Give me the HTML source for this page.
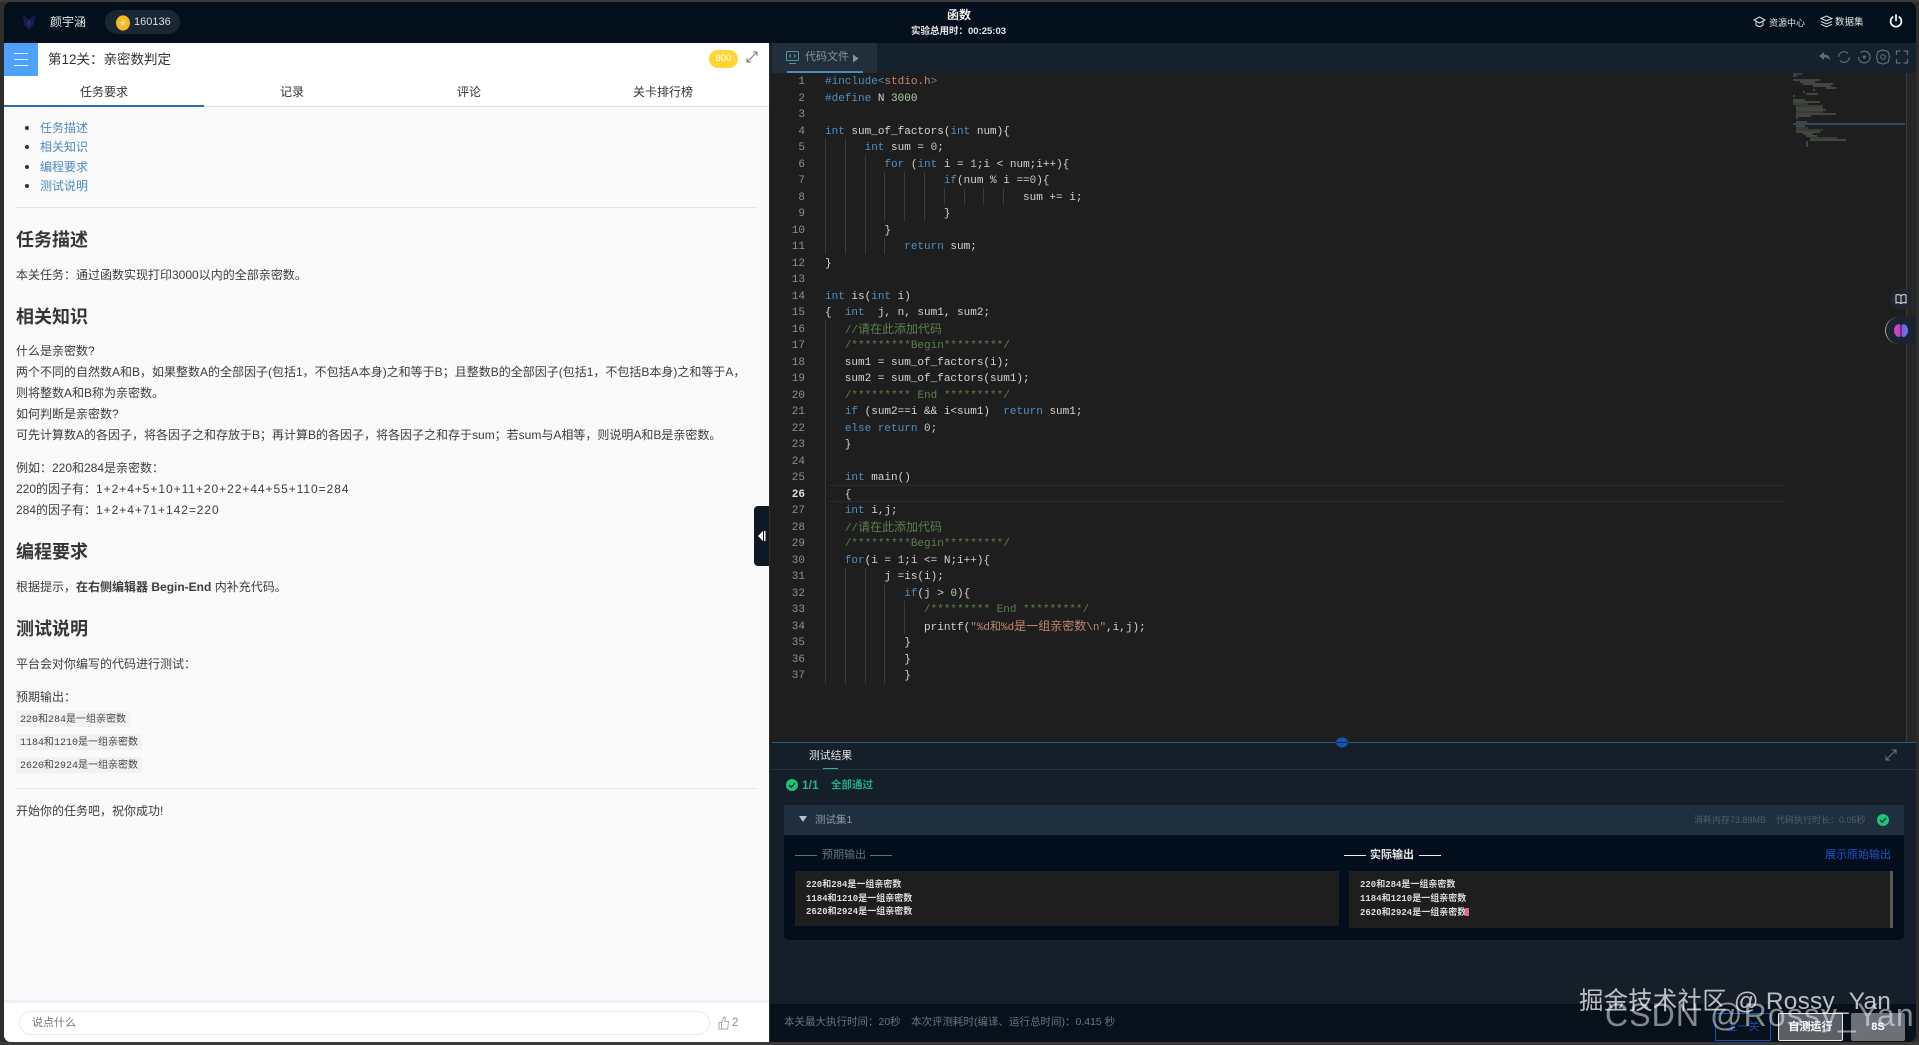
<!DOCTYPE html>
<html lang="zh"><head><meta charset="utf-8"><title>函数</title>
<style>
*{box-sizing:border-box}
html,body{margin:0;padding:0;width:1919px;height:1045px;overflow:hidden;background:#2e2d2d;font-family:"Liberation Sans","Noto Sans CJK SC",sans-serif}
.a{position:absolute}
.t{position:absolute;white-space:nowrap;line-height:20px;height:20px}
.h2{font-size:18px;font-weight:700;color:#363636;left:16px}
.p{font-size:12px;color:#3c3c3c;left:16px}
.link{font-size:12px;color:#4f8ac2;left:40px}
.dot{position:absolute;left:25px;width:4px;height:4px;border-radius:50%;background:#333}
.chip{position:absolute;left:16px;height:16px;background:#f2f2f2;font:10px/19px "Liberation Mono","Noto Sans CJK SC",monospace;color:#444;padding:0 4px;white-space:nowrap}
.tab{position:absolute;top:82px;font-size:12px;line-height:20px;color:#333;transform:translateX(-50%);white-space:nowrap}
#code,#nums{position:absolute;top:74px;font:11px "Liberation Mono","Noto Sans CJK SC",monospace;color:#d4d4d4}
#code{left:825px}
#nums{left:780px;width:25px;text-align:right;color:#8a8f92}
.l{height:16.5px;line-height:16.5px;white-space:pre}
.k{color:#4f8fc4}.c{color:#5c7f4c}.n{color:#b5cea8}.s{color:#c08670}.z{font-size:12px}
.o{position:absolute;font:bold 9px/13.5px "Liberation Mono","Noto Sans CJK SC",monospace;color:#dcdcdc;white-space:pre}
.sp{letter-spacing:.95px}
</style></head><body>

<div class="a" style="left:0;top:0;width:1919px;height:2px;background:#3b3a3a"></div>
<div class="a" style="left:0;top:1042px;width:1919px;height:3px;background:#3b3a3a"></div>

<!-- top bar -->
<div class="a" style="left:4px;top:2px;width:1912px;height:41px;background:#03101b;border-radius:7px 7px 0 0"></div>
<svg class="a" style="left:20px;top:12px" width="18" height="20" viewBox="0 0 18 20"><path d="M3 3l3 2 3 3 3-3 3-2-1 9-5 6-5-6z" fill="#14204f"/><path d="M9 7l1.500 4L9 15l-1.500-4z" fill="#46245c"/></svg>
<div class="t" style="left:50px;top:12px;font-size:12px;color:#e8e8e8">颜宇涵</div>
<div class="a" style="left:105px;top:10px;width:75px;height:24px;border-radius:12px;background:#1a2733"></div>
<svg class="a" style="left:115px;top:15px" width="16" height="16" viewBox="0 0 16 16"><ellipse cx="8" cy="8" rx="7" ry="7.6" fill="#f5b921"/><path d="M8 4.500l1 2.400 2.300.2-1.800 1.500.6 2.400L8 9.800 5.900 11l.6-2.400-1.800-1.500 2.300-.2z" fill="#fde68a"/></svg>
<div class="t" style="left:134px;top:12px;font-size:11px;color:#d8dde0">160136</div>

<div class="t" style="left:947px;top:5px;font-size:12px;font-weight:700;color:#eee">函数</div>
<div class="t" style="left:911px;top:22px;font-size:9.500px;font-weight:700;color:#e8e8e8">实验总用时&#65306;00:25:03</div>

<svg class="a" style="left:1753px;top:16px" width="13" height="12" viewBox="0 0 13 12" fill="none" stroke="#e0e0e0"><path d="M1 4l5.500-3L12 4 6.500 7z"/><path d="M3 5.500V9c2 2 5 2 7 0V5.500"/></svg>
<div class="t" style="left:1769px;top:13px;font-size:9px;color:#e4e4e4">资源中心</div>
<svg class="a" style="left:1820px;top:15px" width="13" height="13" viewBox="0 0 13 13" fill="none" stroke="#e0e0e0"><path d="M1 3.500L6.500 1 12 3.500 6.500 6z"/><path d="M1 6.500L6.500 9 12 6.500M1 9.300l5.500 2.500L12 9.300"/></svg>
<div class="t" style="left:1835px;top:13px;font-size:9.500px;color:#e4e4e4">数据集</div>
<svg class="a" style="left:1889px;top:14px" width="14" height="14" viewBox="0 0 14 14" fill="none" stroke="#fff" stroke-width="1.700" stroke-linecap="round"><path d="M7 1v5.500"/><path d="M3.800 3a5.400 5.400 0 1 0 6.400 0"/></svg>

<!-- left panel -->
<div class="a" style="left:4px;top:43px;width:765px;height:999px;background:#fafafa;border-radius:0 0 0 7px"></div>
<div class="a" style="left:4px;top:43px;width:765px;height:33px;background:#fff"></div>
<div class="a" style="left:4px;top:43px;width:34px;height:33px;background:#4da3fb"></div>
<div class="a" style="left:14px;top:53px;width:14px;height:1px;background:#e8f3ff"></div>
<div class="a" style="left:14px;top:59px;width:14px;height:1px;background:#e8f3ff"></div>
<div class="a" style="left:14px;top:65px;width:14px;height:1px;background:#e8f3ff"></div>
<div class="t" style="left:48px;top:50px;font-size:13.500px;color:#333">第12关&#65306;亲密数判定</div>
<div class="a" style="left:709px;top:50px;width:29px;height:18px;border-radius:9px;background:#ffd633;color:#fff;font-size:9.500px;line-height:18px;text-align:center">800</div>
<svg class="a" style="left:746px;top:51px" width="12" height="12" viewBox="0 0 12 12" fill="none" stroke="#777"><path d="M1 11L11 1M7 1h4v4M1 7v4h4"/></svg>
<div class="a" style="left:4px;top:76px;width:765px;height:31px;background:#fff;border-bottom:1px solid #dfdfdf"></div>
<div class="a" style="left:4px;top:105px;width:200px;height:2px;background:#2b6cb8"></div>
<div class="tab" style="left:104px">任务要求</div>
<div class="tab" style="left:292px">记录</div>
<div class="tab" style="left:469px">评论</div>
<div class="tab" style="left:663px">关卡排行榜</div>

<div class="dot" style="top:126px"></div><div class="t link" style="top:118px">任务描述</div>
<div class="dot" style="top:145px"></div><div class="t link" style="top:137px">相关知识</div>
<div class="dot" style="top:165px"></div><div class="t link" style="top:157px">编程要求</div>
<div class="dot" style="top:184px"></div><div class="t link" style="top:176px">测试说明</div>
<div class="a" style="left:16px;top:207px;width:741px;height:1px;background:#e4e4e4"></div>

<div class="t h2" style="top:230px">任务描述</div>
<div class="t p" style="top:265px">本关任务&#65306;通过函数实现打印3000以内的全部亲密数。</div>
<div class="t h2" style="top:307px">相关知识</div>
<div class="t p" style="top:341px">什么是亲密数?</div>
<div class="t p" style="top:362px">两个不同的自然数A和B&#65292;如果整数A的全部因子(包括1&#65292;不包括A本身)之和等于B&#65307;且整数B的全部因子(包括1&#65292;不包括B本身)之和等于A&#65292;</div>
<div class="t p" style="top:383px">则将整数A和B称为亲密数。</div>
<div class="t p" style="top:404px">如何判断是亲密数?</div>
<div class="t p" style="top:425px">可先计算数A的各因子&#65292;将各因子之和存放于B&#65307;再计算B的各因子&#65292;将各因子之和存于sum&#65307;若sum与A相等&#65292;则说明A和B是亲密数。</div>
<div class="t p" style="top:458px">例如&#65306;220和284是亲密数&#65306;</div>
<div class="t p" style="top:479px">220的因子有&#65306;<span class="sp">1+2+4+5+10+11+20+22+44+55+110=284</span></div>
<div class="t p" style="top:500px">284的因子有&#65306;<span class="sp">1+2+4+71+142=220</span></div>
<div class="t h2" style="top:542px">编程要求</div>
<div class="t p" style="top:577px">根据提示&#65292;<b>在右侧编辑器 Begin-End</b> 内补充代码。</div>
<div class="t h2" style="top:619px">测试说明</div>
<div class="t p" style="top:654px">平台会对你编写的代码进行测试&#65306;</div>
<div class="t p" style="top:687px">预期输出&#65306;</div>
<div class="chip" style="top:711px">220和284是一组亲密数</div>
<div class="chip" style="top:734px">1184和1210是一组亲密数</div>
<div class="chip" style="top:757px">2620和2924是一组亲密数</div>
<div class="a" style="left:16px;top:788px;width:741px;height:1px;background:#e4e4e4"></div>
<div class="t p" style="top:801px">开始你的任务吧&#65292;祝你成功!</div>

<div class="a" style="left:4px;top:1000px;width:765px;height:3px;background:#e8f0fb"></div>
<div class="a" style="left:4px;top:1003px;width:765px;height:39px;background:#fff;border-radius:0 0 0 7px"></div>
<div class="a" style="left:19px;top:1011px;width:691px;height:24px;border:1px solid #ececec;border-radius:12px;background:#fff"></div>
<div class="t" style="left:32px;top:1013px;font-size:11px;color:#777">说点什么</div>
<svg class="a" style="left:718px;top:1016px" width="12" height="14" viewBox="0 0 12 14" fill="none" stroke="#aaa"><path d="M1 6.500h2.500V13H1zM3.500 6.500L6 1c1.200 0 1.500 1 1.300 2L7 5.500h3.500l-.8 7.500H3.500"/></svg>
<div class="t" style="left:732px;top:1013px;font-size:11.500px;color:#888">2</div>

<div class="a" style="left:754px;top:506px;width:15px;height:60px;background:#0d1924;border-radius:4px 0 0 4px"></div>
<svg class="a" style="left:757px;top:530px" width="10" height="12" viewBox="0 0 10 12"><path d="M6 1v10L1 6z" fill="#fff"/><rect x="7" y="1" width="1.500" height="10" fill="#fff"/></svg>

<!-- editor -->
<div class="a" style="left:770px;top:73px;width:1146px;height:670px;background:#1e1e1e"></div>
<div class="a" style="left:770px;top:43px;width:1146px;height:30px;background:#15212d"></div>
<div class="a" style="left:772px;top:43px;width:105px;height:30px;background:#222f3b;border-radius:2px"></div>
<div class="a" style="left:787px;top:71px;width:76px;height:2px;background:#4a8cbf"></div>
<svg class="a" style="left:786px;top:51px" width="13" height="13" viewBox="0 0 13 13" fill="none" stroke="#4d97a8"><rect x=".5" y=".5" width="12" height="9" rx="1"/><path d="M3 12.500h7M5 3.500L3.500 5 5 6.500M8 3.500L9.500 5 8 6.500" /></svg>
<div class="t" style="left:805px;top:47px;font-size:11px;color:#87959f">代码文件</div>
<svg class="a" style="left:852px;top:54px" width="7" height="9" viewBox="0 0 7 9"><path d="M1 .5v8L6.500 4.500z" fill="#87959f"/></svg>

<svg class="a" style="left:1817px;top:49px" width="94" height="16" viewBox="0 0 94 16" fill="none" stroke="#5c6b77" stroke-width="1.200">
<path d="M2 7l5-4v2.500c4 0 6 2 6 6-1.500-2.500-3-3-6-3V11z" fill="#5c6b77" stroke="none"/>
<path d="M21.500 8a5.500 5.500 0 0 1 9.500-3.500M32.500 8A5.500 5.500 0 0 1 23 11.500"/>
<path d="M41.500 8a5.800 5.800 0 1 0 2-4.300"/><circle cx="47.300" cy="8" r="1" fill="#5c6b77"/>
<path d="M61 2.500l5-1.500 5 1.500 1.500 5.500-1.500 5.500-5 1.500-5-1.500L59.500 8z"/><circle cx="66" cy="8" r="2.300"/>
<path d="M79.500 6V2h4M86.500 2h4v4M90.500 10v4h-4M83.500 14h-4v-4"/>
</svg>

<svg class="a" style="left:0;top:0;pointer-events:none" width="1919" height="1045" fill="none" stroke="#3b3b3b" stroke-width="1">
<path d="M825.500 138.750V254.250M825.500 320.250V683.250M845.500 138.750V254.250M845.500 567.750V683.250M865.500 155.250V254.250M865.500 567.750V683.250M884.500 171.750V221.250M884.500 237.750V254.250M884.500 584.250V683.250M904.500 171.750V221.250M904.500 600.750V633.750M924.500 171.750V221.250M944.500 188.250V204.750M964.500 188.250V204.750M983.500 188.250V204.750M1003.500 188.250V204.750"/>
</svg>
<div class="a" style="left:828px;top:485px;width:957px;height:17px;border-top:1px solid #2b2b2b;border-bottom:1px solid #2b2b2b"></div>

<div id="nums">
<div class="l">1</div><div class="l">2</div><div class="l">3</div><div class="l">4</div><div class="l">5</div><div class="l">6</div><div class="l">7</div><div class="l">8</div><div class="l">9</div><div class="l">10</div><div class="l">11</div><div class="l">12</div><div class="l">13</div><div class="l">14</div><div class="l">15</div><div class="l">16</div><div class="l">17</div><div class="l">18</div><div class="l">19</div><div class="l">20</div><div class="l">21</div><div class="l">22</div><div class="l">23</div><div class="l">24</div><div class="l">25</div><div class="l" style="color:#e0e0e0;font-weight:700">26</div><div class="l">27</div><div class="l">28</div><div class="l">29</div><div class="l">30</div><div class="l">31</div><div class="l">32</div><div class="l">33</div><div class="l">34</div><div class="l">35</div><div class="l">36</div><div class="l">37</div>
</div>
<div id="code">
<div class="l"><span class="k">#include&lt;</span><span class="s">stdio.h</span><span class="k">&gt;</span></div>
<div class="l"><span class="k">#define</span> N <span class="n">3000</span></div>
<div class="l"></div>
<div class="l"><span class="k">int</span> sum_of_factors(<span class="k">int</span> num){</div>
<div class="l">      <span class="k">int</span> sum = <span class="n">0</span>;</div>
<div class="l">         <span class="k">for</span> (<span class="k">int</span> i = <span class="n">1</span>;i &lt; num;i++){</div>
<div class="l">                  <span class="k">if</span>(num % i ==<span class="n">0</span>){</div>
<div class="l">                              sum += i;</div>
<div class="l">                  }</div>
<div class="l">         }</div>
<div class="l">            <span class="k">return</span> sum;</div>
<div class="l">}</div>
<div class="l"></div>
<div class="l"><span class="k">int</span> is(<span class="k">int</span> i)</div>
<div class="l">{  <span class="k">int</span>  j, n, sum1, sum2;</div>
<div class="l">   <span class="c">//<span class="z">请在此添加代码</span></span></div>
<div class="l">   <span class="c">/*********Begin*********/</span></div>
<div class="l">   sum1 = sum_of_factors(i);</div>
<div class="l">   sum2 = sum_of_factors(sum1);</div>
<div class="l">   <span class="c">/********* End *********/</span></div>
<div class="l">   <span class="k">if</span> (sum2==i &amp;&amp; i&lt;sum1)  <span class="k">return</span> sum1;</div>
<div class="l">   <span class="k">else</span> <span class="k">return</span> <span class="n">0</span>;</div>
<div class="l">   }</div>
<div class="l"></div>
<div class="l">   <span class="k">int</span> main()</div>
<div class="l">   {</div>
<div class="l">   <span class="k">int</span> i,j;</div>
<div class="l">   <span class="c">//<span class="z">请在此添加代码</span></span></div>
<div class="l">   <span class="c">/*********Begin*********/</span></div>
<div class="l">   <span class="k">for</span>(i = <span class="n">1</span>;i &lt;= N;i++){</div>
<div class="l">         j =is(i);</div>
<div class="l">            <span class="k">if</span>(j &gt; <span class="n">0</span>){</div>
<div class="l">               <span class="c">/********* End *********/</span></div>
<div class="l">               printf(<span class="s">"%d和%d<span class="z">是一组亲密数</span>\n"</span>,i,j);</div>
<div class="l">            }</div>
<div class="l">            }</div>
<div class="l">            }</div>
</div>

<!-- minimap -->
<svg class="a" style="left:0;top:0" width="1919" height="1045" fill="none" stroke-width="1">
<g opacity=".7">
<path d="M1793 74h9M1793 76h4M1793 80h3M1793 104h3M1797 108h1" stroke="#4f7fa8"/>
<path d="M1793 80h27M1800 82h15M1803 84h30M1813 86h18M1826 88h10M1813 90h2M1803 92h2M1806 94h12M1793 96h2M1793 100h12M1793 102h27M1796 108h27M1796 110h30M1796 114h40M1796 116h15M1796 118h2M1796 122h11M1796 126h9M1796 132h24M1803 134h10M1806 136h11M1810 140h36M1806 142h2M1806 144h2M1806 146h2" stroke="#8a8a8a"/>
<path d="M1796 104h12M1796 106h27M1796 112h27M1796 128h12M1796 130h27M1810 138h27" stroke="#5c7f4c"/>
</g>
<path d="M1793 124h112" stroke="#2a4a66" stroke-width="2"/>
</svg>
<div class="a" style="left:1906px;top:73px;width:10px;height:670px;background:#262626;border-left:1px solid #3a3a3a"></div>

<div class="a" style="left:1890px;top:288px;width:22px;height:22px;border-radius:50%;background:#20252e"></div>
<svg class="a" style="left:1895px;top:293px" width="12" height="12" viewBox="0 0 12 12" fill="none" stroke="#e8e8e8"><path d="M6 2.500C4.500 1.500 2.500 1.500 1 2v8c1.500-.5 3.500-.5 5 .5 1.500-1 3.500-1 5-.5V2c-1.500-.5-3.500-.5-5 .5zM6 2.500v8"/></svg>
<div class="a" style="left:1885px;top:317px;width:31px;height:27px;background:#1b2230;border-radius:14px 0 0 14px;border-left:1px solid #9aa"></div>
<svg class="a" style="left:1893px;top:323px" width="16" height="16" viewBox="0 0 16 16"><defs><linearGradient id="g" x1="0" x2="1"><stop offset="0" stop-color="#e0459c"/><stop offset=".55" stop-color="#9a4be0"/><stop offset="1" stop-color="#4a8df0"/></linearGradient></defs><path d="M7.500 2C6 .5 2.500 1.500 2 4 .5 6 .8 10 2.500 12c1.300 2.300 3.700 2.400 5 1.300zM8.500 2C10 .5 13.500 1.500 14 4c1.500 2 1.200 6-.5 8-1.300 2.300-3.700 2.400-5 1.300z" fill="url(#g)"/></svg>

<!-- results panel -->
<div class="a" style="left:770px;top:743px;width:1146px;height:261px;background:#141f2a"></div>
<div class="a" style="left:772px;top:742px;width:1144px;height:1px;background:#2a5a85"></div>
<svg class="a" style="left:1336px;top:737px" width="12" height="11" viewBox="0 0 12 11"><ellipse cx="6" cy="5.500" rx="6" ry="5" fill="#1753b8"/><path d="M0 5.500h12" stroke="#0c2a55"/></svg>
<div class="t" style="left:809px;top:746px;font-size:10.800px;color:#e4e4e4">测试结果</div>
<div class="a" style="left:770px;top:769px;width:1146px;height:1px;background:#26323c"></div>
<div class="a" style="left:823px;top:768px;width:15px;height:1px;background:#2bb39a"></div>
<svg class="a" style="left:1885px;top:749px" width="12" height="12" viewBox="0 0 12 12" fill="none" stroke="#68757f"><path d="M1 11L11 1M7 1h4v4M1 7v4h4"/></svg>
<svg class="a" style="left:786px;top:779px" width="12" height="12" viewBox="0 0 12 12"><circle cx="6" cy="6" r="6" fill="#1cc47a"/><path d="M3 6l2.200 2.200L9 4" fill="none" stroke="#0e3a2a" stroke-width="1.500"/></svg>
<div class="t" style="left:802px;top:775px;font-size:12px;font-weight:700;color:#2bb38a">1/1</div>
<div class="t" style="left:831px;top:775px;font-size:10.500px;font-weight:700;color:#1fae86">全部通过</div>

<div class="a" style="left:784px;top:805px;width:1120px;height:30px;background:#1f2f3d"></div>
<svg class="a" style="left:799px;top:815px" width="8" height="8" viewBox="0 0 8 8"><path d="M0 1h8L4 7z" fill="#b8c2ca"/></svg>
<div class="t" style="left:815px;top:810px;font-size:10.500px;color:#8b9aa5">测试集1</div>
<div class="t" style="left:1694px;top:810px;font-size:9px;color:#4f5e6a">消耗内存73.89MB</div>
<div class="t" style="left:1776px;top:810px;font-size:9px;color:#4f5e6a">代码执行时长&#65306;0.05秒</div>
<svg class="a" style="left:1877px;top:814px" width="12" height="12" viewBox="0 0 12 12"><circle cx="6" cy="6" r="6" fill="#1cc47a"/><path d="M3 6l2.200 2.200L9 4" fill="none" stroke="#0e3a2a" stroke-width="1.500"/></svg>

<div class="a" style="left:784px;top:835px;width:1120px;height:105px;background:#020e1c;border-radius:0 0 5px 5px"></div>
<div class="a" style="left:795px;top:855px;width:22px;height:1px;background:#65727c"></div>
<div class="t" style="left:822px;top:845px;font-size:11px;color:#65727c">预期输出</div>
<div class="a" style="left:870px;top:855px;width:22px;height:1px;background:#65727c"></div>
<div class="a" style="left:1344px;top:855px;width:22px;height:1px;background:#eee"></div>
<div class="t" style="left:1370px;top:845px;font-size:11px;font-weight:700;color:#e8e8e8">实际输出</div>
<div class="a" style="left:1419px;top:855px;width:22px;height:1px;background:#eee"></div>
<div class="t" style="left:1825px;top:845px;font-size:11px;color:#1a56c4">展示原始输出</div>

<div class="a" style="left:795px;top:871px;width:544px;height:55px;background:#1e1e1e"></div>
<div class="a" style="left:1349px;top:871px;width:544px;height:57px;background:#1e1e1e"></div>
<div class="a" style="left:1890px;top:871px;width:3px;height:57px;background:#5a5a5a"></div>
<div class="o" style="left:806px;top:879px">220和284是一组亲密数
1184和1210是一组亲密数
2620和2924是一组亲密数</div>
<div class="o" style="left:1360px;top:878px;line-height:14px">220和284是一组亲密数
1184和1210是一组亲密数
2620和2924是一组亲密数</div>
<div class="a" style="left:1465px;top:908px;width:4px;height:8px;background:#e2687a"></div>

<!-- footer -->
<div class="a" style="left:770px;top:1004px;width:1146px;height:38px;background:#06111b;border-radius:0 0 7px 0"></div>
<div class="t" style="left:784px;top:1012px;font-size:10.500px;color:#69757f">本关最大执行时间&#65306;20秒</div>
<div class="t" style="left:911px;top:1012px;font-size:10.500px;color:#69757f">本次评测耗时(编译、运行总时间)&#65306;0.415 秒</div>
<div class="a" style="left:1715px;top:1013px;width:56px;height:28px;border:1px solid #1450b4;color:#1450b4;font-size:11px;line-height:26px;text-align:center">上一关</div>
<div class="a" style="left:1778px;top:1013px;width:65px;height:28px;border:1px solid #eee;background:#5a6066;color:#fff;font-size:11px;font-weight:700;line-height:26px;text-align:center;border-radius:2px">自测运行</div>
<div class="a" style="left:1851px;top:1013px;width:54px;height:28px;background:#6b7176;color:#fff;font-size:11px;font-weight:700;line-height:28px;text-align:center;border-radius:2px">8S</div>

<!-- watermarks -->
<div class="t" style="left:1605px;top:995px;height:40px;line-height:40px;font-size:32px;letter-spacing:1.100px;color:rgba(255,255,255,.5)">CSDN @Rossy_Yan</div>
<div class="t" style="left:1579px;top:982px;height:40px;line-height:40px;font-size:24.400px;letter-spacing:.25px;color:rgba(255,255,255,.72)">掘金技术社区 @ Rossy_Yan</div>

</body></html>
